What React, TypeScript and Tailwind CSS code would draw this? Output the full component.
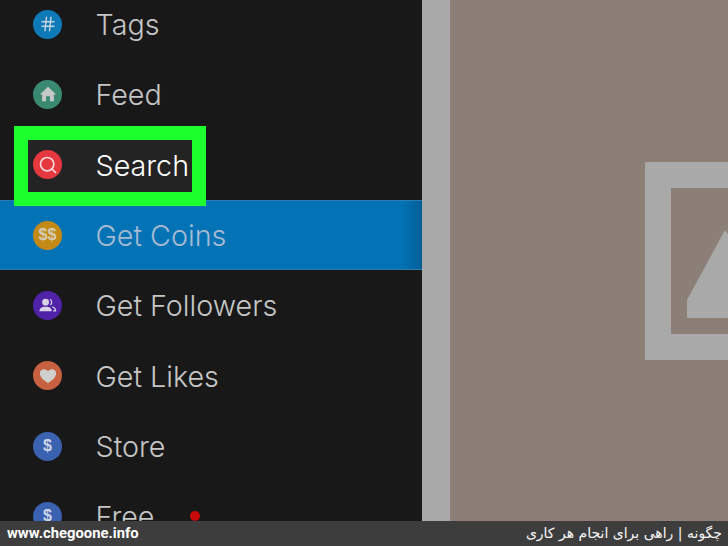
import { Hash, Search } from 'lucide-react'
import React from 'react'

const HomeGlyph = () => (
  <svg viewBox="0 0 20 20" className="w-[18px] h-[18px]">
    <path d="M10 2 L19 10.5 L16.5 10.5 L16.5 18 L12.2 18 L12.2 12.6 L7.8 12.6 L7.8 18 L3.5 18 L3.5 10.5 L1 10.5 Z" fill="#c8c8c8" />
  </svg>
)

const HeartGlyph = () => (
  <svg viewBox="0 0 20 20" className="w-[18px] h-[18px]">
    <path d="M10 18 C4 14 1 11 1 7 C1 4 3.3 2.5 5.5 2.5 C7.5 2.5 9 3.6 10 5 C11 3.6 12.5 2.5 14.5 2.5 C16.7 2.5 19 4 19 7 C19 11 16 14 10 18 Z" fill="#cfcfcf" />
  </svg>
)

const FollowersGlyph = () => (
  <svg viewBox="0 0 20 20" className="w-[19px] h-[19px]">
    <circle cx="8" cy="6.5" r="3.6" fill="#d8d0e6" />
    <path d="M1.5 16 C1.5 12.5 4 11.2 8 11.2 C12 11.2 14.5 12.5 14.5 16 Z" fill="#d8d0e6" />
    <path d="M12.6 3.6 A3.4 3.4 0 0 1 13 9.4 M15 11.4 C17.2 12 18.5 13.2 18.5 15.6 L16 15.6" fill="none" stroke="#d8d0e6" strokeWidth="1.3" />
  </svg>
)

const DollarGlyph = () => (
  <span className="text-[16px] font-bold text-[#cdd6e8] font-['Liberation_Sans',sans-serif]">$</span>
)

const rows = [
  { label: 'Tags', color: 'bg-[#0f7ab8]', icon: <Hash size={18} strokeWidth={1.9} color="#c8d4dc" /> },
  { label: 'Feed', color: 'bg-[#3a8a72]', icon: <HomeGlyph /> },
  { label: 'Search', color: 'bg-[#e5383f]', icon: <Search size={20} strokeWidth={2} color="#f2d8d8" />, selected: true },
  { label: 'Get Coins', color: 'bg-[#c48a16]', icon: <span className="text-[16px] font-bold text-[#d6cdb8] font-['Liberation_Sans',sans-serif]">$$</span>, active: true },
  { label: 'Get Followers', color: 'bg-[#4f22a8]', icon: <FollowersGlyph /> },
  { label: 'Get Likes', color: 'bg-[#c8613f]', icon: <HeartGlyph /> },
  { label: 'Store', color: 'bg-[#3b62b0]', icon: <DollarGlyph /> },
  { label: 'Free', color: 'bg-[#3b62b0]', icon: <DollarGlyph />, dot: true },
]

const App = () => {
  return (
    <div className="w-[728px] h-[546px] overflow-hidden flex flex-col bg-[#181818]">
      <div className="h-[521px] flex overflow-hidden">
        <div className="w-[422px] shrink-0 bg-[#181818] isolate">
          <div className="-mt-[11px]">
            {rows.map((row) => (
              <div
                key={row.label}
                className={`relative h-[70.33px] flex items-center pl-[33px] ${row.active ? 'bg-gradient-to-r from-[#0373b6] via-[#0373b6] via-95% to-[#025f96] border-y border-[#2a7fb0]' : ''}`}
              >
                {row.selected && (
                  <div className="absolute left-[14px] -top-[4px] w-[192px] h-[80px] border-[14px] border-[#1eff2e] bg-[#232323] z-10" />
                )}
                <div className={`relative z-20 w-[29px] h-[29px] rounded-full flex items-center justify-center ${row.color}`}>
                  {row.icon}
                </div>
                <span
                  className={`relative z-20 ml-[33.5px] mt-[1px] text-[28.7px] font-['Inter',sans-serif] font-light ${row.selected ? 'text-white' : row.active ? 'text-[#a6bbd2]' : 'text-[#c6c6c6]'}`}
                >
                  {row.label}
                </span>
                {row.dot && <div className="ml-[35px] w-[10px] h-[10px] rounded-full bg-[#c80a0a]" />}
              </div>
            ))}
          </div>
        </div>
        <div className="w-[28px] shrink-0 bg-[#a9a9a9]" />
        <div className="flex-1 bg-[#8b7f77] pl-[195px] pt-[162px] overflow-hidden">
          <svg width="83" height="198" viewBox="0 0 83 198">
            <path d="M0 0 H83 V26 H26 V172 H83 V198 H0 Z" fill="#a9a9a9" />
            <path d="M42 156 V138 L80 68 L83 72 V156 Z" fill="#a9a9a9" />
          </svg>
        </div>
      </div>
      <div className="h-[25px] bg-[#3d3d3d] flex items-center justify-between pl-[7px] pr-[6px]">
        <span className="text-[14.8px] font-bold text-white font-['Roboto',sans-serif]">www.chegoone.info</span>
        <span dir="rtl" className="text-[14px] text-[#f7f7f7] font-['DejaVu_Sans',sans-serif]">چگونه | راهی برای انجام هر کاری</span>
      </div>
    </div>
  )
}

export default App
